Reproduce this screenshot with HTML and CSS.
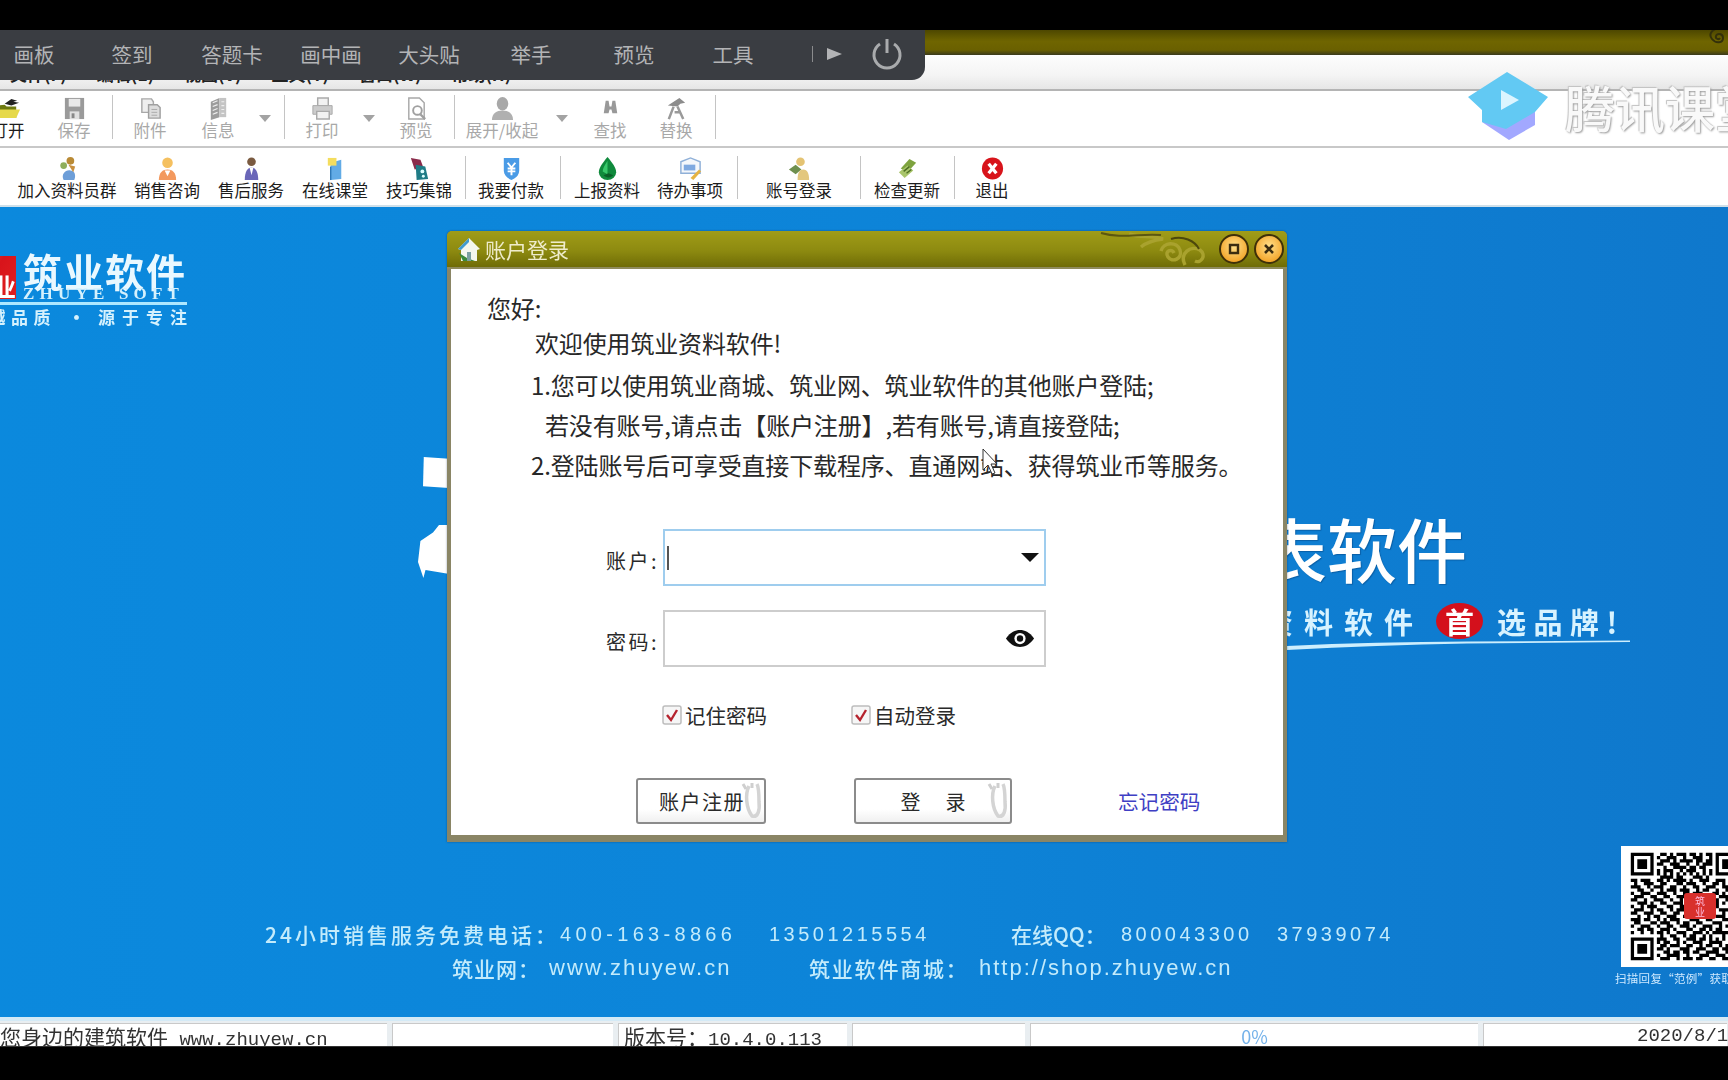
FILE: index.html
```html
<!DOCTYPE html>
<html lang="zh-CN">
<head>
<meta charset="utf-8">
<title>筑业资料软件</title>
<link rel="stylesheet" href="styles.css">
</head>
<body>
<div class="screen">
  <div class="black-top"></div>
  <div class="app-title">
    <svg class="title-swirl" viewBox="0 0 40 25" width="40" height="25"><path d="M34 -2c-10 0-14 6-10 11s11 4 11-1-6-5-7-2 3 4 4 2" fill="none" stroke="#33300a" stroke-width="2"/></svg>
  </div>
  <nav class="menubar">
    <span>文件(F)</span><span>编辑(E)</span><span>视图(V)</span><span>工具(T)</span><span>窗口(W)</span><span>帮助(H)</span>
  </nav>

  <div class="toolbar toolbar-file">
    <div class="tool"><svg class="ico" viewBox="0 0 26 26"><path d="M1 10l8-1 2 2h10v12H1z" fill="#6e7a10"/><path d="M4 14h21l-4 9H1z" fill="#e6d94a"/><path d="M9 8l7-5 6 2-4 1 6 1-8 3z" fill="#222"/></svg><span>打开</span></div>
    <div class="tool off"><svg class="ico" viewBox="0 0 26 26"><path d="M3 2h20v22H3z" fill="#9a9a9a"/><path d="M7 3h12v8H7z" fill="#e8e8e8"/><path d="M8 16h10v8H8z" fill="#e0e0e0"/><path d="M10 18h3v5h-3z" fill="#888"/></svg><span>保存</span></div>
    <i class="sep"></i>
    <div class="tool off"><svg class="ico" viewBox="0 0 26 26"><path d="M4 3h10l2 3v11H4z" fill="#eee" stroke="#a8a8a8" stroke-width="1.5"/><path d="M11 9h9l3 3v11H11z" fill="#ddd" stroke="#a0a0a0" stroke-width="1.5"/><path d="M14 14h6M14 17h6M14 20h6" stroke="#aaa"/></svg><span>附件</span></div>
    <div class="tool off"><svg class="ico" viewBox="0 0 26 26"><path d="M5 6l9-4v20l-9 3z" fill="#9c9c9c"/><path d="M14 2h7v20h-7z" fill="#c4c4c4"/><path d="M7 7l5-2M7 11l5-2M7 15l5-2M7 19l5-2M16 6h3M16 10h3M16 14h3M16 18h3" stroke="#eee" stroke-width="1.2"/></svg><span>信息</span></div>
    <div class="caret"></div>
    <i class="sep"></i>
    <div class="tool off"><svg class="ico" viewBox="0 0 26 26"><path d="M8 2h11v8H8z" fill="#f2f2f2" stroke="#aaa" stroke-width="1.5"/><path d="M3 10h20v9H3z" fill="#ccc" stroke="#aaa"/><path d="M7 16h13v8H7z" fill="#f2f2f2" stroke="#aaa" stroke-width="1.5"/></svg><span>打印</span></div>
    <div class="caret"></div>
    <div class="tool off"><svg class="ico" viewBox="0 0 26 26"><path d="M5 2h11l5 5v17H5z" fill="#fff" stroke="#a8a8a8" stroke-width="1.5"/><circle cx="14" cy="15" r="4.5" fill="none" stroke="#a0a0a0" stroke-width="2"/><path d="M17 19l5 5" stroke="#a0a0a0" stroke-width="2.5"/></svg><span>预览</span></div>
    <i class="sep"></i>
    <div class="tool off"><svg class="ico" viewBox="0 0 26 26"><ellipse cx="13" cy="8" rx="6" ry="7" fill="#a8a8a8"/><path d="M2 25c0-7 5-10 11-10s11 3 11 10z" fill="#b0b0b0"/></svg><span>展开/收起</span></div>
    <div class="caret"></div>
    <div class="tool off"><svg class="ico" viewBox="0 0 26 26"><path d="M8 5h3l1 6h2l1-6h3l2 13h-5l-1-4h-2l-1 4H6z" fill="#999"/></svg><span>查找</span></div>
    <div class="tool off"><svg class="ico" viewBox="0 0 26 26"><path d="M4 10L16 2l6 5-5 1-3 3z" fill="#8c8c8c"/><path d="M10 11l-5 13M14 11l6 13M11 17h6" stroke="#9a9a9a" stroke-width="2.6" fill="none"/></svg><span>替换</span></div>
    <i class="sep"></i>
  </div>

  <div class="toolbar toolbar-links">
    <div class="tool"><svg class="ico" viewBox="0 0 26 26"><circle cx="16" cy="5" r="4" fill="#b98a35"/><circle cx="9" cy="10" r="3.5" fill="#8fae5b"/><path d="M9 25c-3-6 2-11 7-10 5 0 6 6 4 10z" fill="#6d9ed8"/><path d="M14 9l7 2-2 6z" fill="#c88f3e"/></svg><span>加入资料员群</span></div>
    <div class="tool"><svg class="ico" viewBox="0 0 26 26"><circle cx="13" cy="7" r="5.5" fill="#f5c05f"/><path d="M4 25c0-8 4-11 9-11s9 3 9 11z" fill="#f3995e"/><path d="M10 15l3 6 3-6z" fill="#fff"/></svg><span>销售咨询</span></div>
    <div class="tool"><svg class="ico" viewBox="0 0 26 26"><circle cx="13" cy="6" r="4.5" fill="#7a5a40"/><path d="M6 25c0-9 3-13 7-13s7 4 7 13z" fill="#6a66b8"/><path d="M11 12h4l-2 8z" fill="#fff"/></svg><span>售后服务</span></div>
    <div class="tool"><svg class="ico" viewBox="0 0 26 26"><path d="M8 7l11-3v20l-11 1z" fill="#62abe6"/><path d="M5 2h9v8H5z" fill="#f4dd5e"/><path d="M8 11v14" stroke="#2f79b8" stroke-width="1.5"/></svg><span>在线课堂</span></div>
    <div class="tool"><svg class="ico" viewBox="0 0 26 26"><path d="M4 2l10 2 3 8-9 2z" fill="#8a2a4a"/><path d="M9 9l10 2 3 13-12 1z" fill="#1f7c86"/><circle cx="16" cy="16" r="2" fill="#dff"/><circle cx="17" cy="21" r="1.5" fill="#dff"/></svg><span>技巧集锦</span></div>
    <i class="sep"></i>
    <div class="tool"><svg class="ico" viewBox="0 0 26 26"><path d="M5 2h16v13c0 5-4 8-8 10-4-2-8-5-8-10z" fill="#4a9be6"/><path d="M9 7l4 5 4-5M9 13h8M9 16h8M13 12v8" stroke="#fff" stroke-width="2" fill="none"/></svg><span>我要付款</span></div>
    <i class="sep"></i>
    <div class="tool"><svg class="ico" viewBox="0 0 26 26"><path d="M13 1c5 6 9 11 9 16a9 8 0 0 1-18 0c0-5 4-10 9-16z" fill="#0f8a3c"/><path d="M13 5c-3 5-5 8-5 11l5 3z" fill="#38c86a"/><path d="M9 20c3 3 7 3 10 0l-5-2z" fill="#0a5f28"/></svg><span>上报资料</span></div>
    <div class="tool"><svg class="ico" viewBox="0 0 26 26"><path d="M3 6l10-4 10 4v12H3z" fill="#f4f7fb" stroke="#8fb0d8" stroke-width="1.5"/><path d="M6 9h12v6H6z" fill="#7fa9e0"/><path d="M13 23l9-9 2 2-8 9z" fill="#e6b341"/></svg><span>待办事项</span></div>
    <i class="sep"></i>
    <div class="tool"><svg class="ico" viewBox="0 0 26 26"><circle cx="14" cy="6" r="4.5" fill="#e4c373"/><path d="M2 14l7-5 6 5-6 5z" fill="#6e8f4e"/><path d="M11 25c0-8 2-11 6-11s6 4 6 11z" fill="#e3c77e"/></svg><span>账号登录</span></div>
    <i class="sep"></i>
    <div class="tool"><svg class="ico" viewBox="0 0 26 26"><path d="M6 13l9-10 7 4-9 10z" fill="#7ea33f"/><path d="M4 17l9-7 6 5-9 8z" fill="#a9c56b"/><path d="M9 16l6-5M12 18l5-4" stroke="#4d6e22" stroke-width="1.5"/></svg><span>检查更新</span></div>
    <i class="sep"></i>
    <div class="tool"><svg class="ico" viewBox="0 0 26 26"><ellipse cx="13" cy="13" rx="11" ry="11.5" fill="#d8141b"/><path d="M9 8l8 10M17 8L9 18" stroke="#fff" stroke-width="3.4"/></svg><span>退出</span></div>
  </div>

  <main class="canvas">
    <div class="brand">
      <div class="brand-mark"><span>业</span></div>
      <div class="brand-text">
        <div class="brand-name">筑业软件</div>
        <div class="brand-en">ZHUYE SOFT</div>
        <div class="brand-slogan"><span>卓越品质</span><b>•</b><span class="slogan-end">源于专注</span></div>
      </div>
    </div>

    <div class="hero-title">报表软件</div>
    <div class="hero-sub"><span>资料软件</span><em>首</em><span class="hero-sub-end">选品牌!</span></div>
    <svg class="hero-line" viewBox="0 0 345 10" width="345" height="10"><path d="M0 6C60 3 120 2 180 1.5L343 .5V2L180 3.5C120 4.5 60 7 0 10z" fill="#cdeefd"/></svg>
    <div class="hero-frag hero-frag-a"></div>
    <div class="hero-frag hero-frag-b"></div>

    <section class="dialog">
      <header class="dialog-bar">
        <svg class="dialog-house" viewBox="0 0 28 28" width="28" height="28"><path d="M3 14L14 3l11 11-3 1v11H6V15z" fill="#f4f7ee"/><path d="M14 3L3 14l3 1 8-8z" fill="#3f9bd0"/><path d="M4 18l4 8h12l-8-3z" fill="#3a8a3a"/><path d="M12 17h4v9h-4z" fill="#7aa0a0"/></svg>
        <h1>账户登录</h1>
        <svg class="dialog-orn" viewBox="0 0 130 36" width="130" height="36"><g fill="none" stroke="#a9a22e" stroke-width="3.5"><path d="M30 3c12 4 22 1 34 5-9 1-16 3-22 8"/><path d="M62 20c2-9 16-10 19-1s-8 13-12 7 4-9 6-4"/><path d="M86 34c-6-12 6-20 15-15 7 5 1 14-5 11"/></g><path d="M2 2c20 6 40 0 60 2" fill="none" stroke="#5c5710" stroke-width="2"/><path d="M72 8c12-4 24 2 28 10" fill="none" stroke="#4d480c" stroke-width="2"/></svg>
        <button class="round-btn" type="button" aria-label="最大化"><svg viewBox="0 0 14 14" width="14" height="14"><path d="M3 3h8v8H3z" fill="none" stroke="#3a2c10" stroke-width="2.4"/></svg></button>
        <button class="round-btn" type="button" aria-label="关闭"><svg viewBox="0 0 14 14" width="14" height="14"><path d="M3 3l8 8M11 3l-8 8" stroke="#3a2c10" stroke-width="2.6"/></svg></button>
      </header>
      <div class="dialog-body">
        <p class="line hello">您好:</p>
        <p class="line welcome">欢迎使用筑业资料软件!</p>
        <p class="line item">1.您可以使用筑业商城、筑业网、筑业软件的其他账户登陆;</p>
        <p class="line note">若没有账号,请点击【账户注册】,若有账号,请直接登陆;</p>
        <p class="line item">2.登陆账号后可享受直接下载程序、直通网站、获得筑业币等服务。</p>

        <div class="field field-user">
          <label>账户:</label>
          <div class="input input-focus"><i class="text-caret"></i><i class="drop"></i></div>
        </div>
        <div class="field field-pass">
          <label>密码:</label>
          <div class="input"><svg class="eye" viewBox="0 0 32 20" width="30" height="19"><path d="M1 10C6 3 11 1 16 1s10 2 15 9c-5 7-10 9-15 9S6 17 1 10z" fill="#111"/><circle cx="16" cy="10" r="6" fill="#fff"/><circle cx="16" cy="10" r="3.4" fill="#111"/></svg></div>
        </div>

        <div class="checks">
          <div class="check"><svg viewBox="0 0 20 20" width="20" height="20"><rect x="1" y="1" width="18" height="18" rx="2" fill="#f6f6f6" stroke="#bdbdbd" stroke-width="1.5"/><path d="M5 10l4 5 6-10" fill="none" stroke="#b5232e" stroke-width="2.4"/></svg><span>记住密码</span></div>
          <div class="check"><svg viewBox="0 0 20 20" width="20" height="20"><rect x="1" y="1" width="18" height="18" rx="2" fill="#f6f6f6" stroke="#bdbdbd" stroke-width="1.5"/><path d="M5 10l4 5 6-10" fill="none" stroke="#b5232e" stroke-width="2.4"/></svg><span>自动登录</span></div>
        </div>

        <div class="actions">
          <button class="btn btn-reg" type="button">账户注册<svg class="btn-orn" viewBox="0 0 24 42" width="24" height="42"><path d="M10 6c-4 8-3 22 3 30 6 2 8-6 7-14 0-8 0-14-2-18" fill="none" stroke="#d4d4d4" stroke-width="3.5"/><path d="M4 4l3 5M13 3v5" stroke="#cfcfcf" stroke-width="3"/></svg></button>
          <button class="btn btn-login" type="button"><span>登</span><span>录</span><svg class="btn-orn" viewBox="0 0 24 42" width="24" height="42"><path d="M10 6c-4 8-3 22 3 30 6 2 8-6 7-14 0-8 0-14-2-18" fill="none" stroke="#d4d4d4" stroke-width="3.5"/><path d="M4 4l3 5M13 3v5" stroke="#cfcfcf" stroke-width="3"/></svg></button>
          <a class="forgot">忘记密码</a>
        </div>
      </div>
    </section>

    <svg class="cursor" viewBox="0 0 16 28" width="16" height="28"><path d="M1 1v21l5-5 4 9 3-1-4-9h6z" fill="#fff" stroke="#333" stroke-width="1"/></svg>

    <div class="qr">
      <svg viewBox="0 0 38 37" width="124" height="121"><g transform="translate(3 2)"><path fill-rule="evenodd" d="M0 0h7v7H0zM1 1v5h5V1zM2 2h3v3H2zM26 0h7v7h-7zM27 1v5h5V1zM28 2h3v3h-3zM0 26h7v7H0zM1 27v5h5v-5zM2 28h3v3H2z"/><path fill="none" stroke="#000" d="M9 .5h2M12 .5h1M14 .5h3M18 .5h2M21 .5h1M23 .5h2M8 1.5h1M11 1.5h3M16 1.5h1M19 1.5h3M24 1.5h1M9 2.5h3M13 2.5h1M15 2.5h4M20 2.5h2M23 2.5h2M8 3.5h2M12 3.5h3M17 3.5h1M20 3.5h1M22 3.5h3M10 4.5h1M13 4.5h4M18 4.5h2M21 4.5h2M8 5.5h1M10 5.5h3M15 5.5h1M17 5.5h3M22 5.5h1M24 5.5h1M8 6.5h1M10 6.5h1M12 6.5h1M14 6.5h1M16 6.5h1M18 6.5h1M20 6.5h1M22 6.5h1M24 6.5h1M9 7.5h4M14 7.5h2M19 7.5h3M23 7.5h1M0 8.5h2M3 8.5h3M8 8.5h2M11 8.5h1M13 8.5h4M18 8.5h1M21 8.5h3M26 8.5h3M30 8.5h3M1 9.5h1M4 9.5h3M9 9.5h2M14 9.5h2M17 9.5h3M22 9.5h1M25 9.5h2M28 9.5h1M31 9.5h2M0 10.5h3M5 10.5h1M7 10.5h3M12 10.5h2M16 10.5h1M19 10.5h2M23 10.5h3M28 10.5h2M32 10.5h1M2 11.5h2M6 11.5h1M9 11.5h1M11 11.5h3M15 11.5h3M20 11.5h1M22 11.5h2M26 11.5h1M29 11.5h3M0 12.5h1M3 12.5h3M8 12.5h3M13 12.5h1M16 12.5h2M19 12.5h3M25 12.5h2M28 12.5h1M31 12.5h2M1 13.5h3M6 13.5h2M10 13.5h2M14 13.5h3M20 13.5h2M23 13.5h1M27 13.5h3M32 13.5h1M0 14.5h2M4 14.5h1M7 14.5h3M12 14.5h1M15 14.5h1M18 14.5h3M24 14.5h3M29 14.5h2M2 15.5h3M6 15.5h1M9 15.5h2M13 15.5h3M17 15.5h1M21 15.5h2M26 15.5h1M28 15.5h1M31 15.5h2M0 16.5h1M3 16.5h1M5 16.5h3M11 16.5h2M15 16.5h2M19 16.5h1M23 16.5h4M30 16.5h1M1 17.5h3M6 17.5h1M8 17.5h2M12 17.5h1M14 17.5h3M20 17.5h2M25 17.5h1M27 17.5h3M32 17.5h1M0 18.5h2M4 18.5h3M9 18.5h2M13 18.5h2M17 18.5h1M22 18.5h3M28 18.5h1M30 18.5h3M2 19.5h1M5 19.5h1M7 19.5h2M11 19.5h3M16 19.5h2M21 19.5h1M24 19.5h1M26 19.5h3M32 19.5h1M0 20.5h3M4 20.5h2M8 20.5h1M10 20.5h1M12 20.5h3M18 20.5h3M23 20.5h2M28 20.5h3M1 21.5h2M6 21.5h2M9 21.5h3M14 21.5h1M16 21.5h2M20 21.5h2M25 21.5h3M30 21.5h1M0 22.5h1M3 22.5h3M8 22.5h1M11 22.5h2M15 22.5h3M19 22.5h1M22 22.5h3M27 22.5h1M29 22.5h4M2 23.5h2M5 23.5h2M9 23.5h3M13 23.5h1M17 23.5h2M21 23.5h2M24 23.5h1M26 23.5h2M31 23.5h1M0 24.5h1M3 24.5h1M6 24.5h1M8 24.5h2M11 24.5h1M14 24.5h3M19 24.5h3M23 24.5h1M25 24.5h5M32 24.5h1M9 25.5h1M12 25.5h2M16 25.5h1M18 25.5h2M22 25.5h1M24 25.5h1M28 25.5h1M30 25.5h2M8 26.5h3M13 26.5h2M17 26.5h3M21 26.5h2M24 26.5h1M26 26.5h1M28 26.5h1M31 26.5h1M8 27.5h1M10 27.5h2M14 27.5h1M16 27.5h1M19 27.5h3M24 27.5h4M30 27.5h2M9 28.5h2M12 28.5h3M17 28.5h2M21 28.5h1M23 28.5h2M27 28.5h1M29 28.5h4M8 29.5h2M11 29.5h1M15 29.5h3M20 29.5h3M25 29.5h2M28 29.5h2M32 29.5h1M10 30.5h2M13 30.5h2M16 30.5h2M19 30.5h2M23 30.5h4M29 30.5h1M31 30.5h1M8 31.5h1M11 31.5h4M17 31.5h1M21 31.5h3M26 31.5h3M30 31.5h3M9 32.5h3M14 32.5h1M16 32.5h3M20 32.5h2M24 32.5h2M28 32.5h2M31 32.5h1"/></g></svg>
      <div class="qr-logo"><span>筑</span><span>业</span></div>
    </div>
    <div class="qr-caption">扫描回复“范例”获取资料</div>

    <div class="contact">
      <div class="contact-row row-a">
        <span class="c-tel-label">24小时销售服务免费电话：</span><span class="num c-tel">400-163-8866</span><span class="num c-mob">13501215554</span><span class="c-qq">在线QQ：</span><span class="num c-qq1">800043300</span><span class="num c-qq2">37939074</span>
      </div>
      <div class="contact-row row-b">
        <span class="c-web-label">筑业网：</span><span class="c-web">www.zhuyew.cn</span><span class="c-shop-label">筑业软件商城：</span><span class="c-shop">http://shop.zhuyew.cn</span>
      </div>
    </div>
  </main>

  <footer class="status">
    <div class="cell cell-a"><span class="cjk">您身边的建筑软件</span> www.zhuyew.cn</div>
    <div class="cell cell-b"></div>
    <div class="cell cell-c"><span class="cjk">版本号：</span>10.4.0.113</div>
    <div class="cell cell-d"></div>
    <div class="cell cell-e">0%</div>
    <div class="cell cell-f">2020/8/10</div>
  </footer>
  <div class="black-bottom"></div>

  <div class="overlay-bar">
    <span>画板</span><span>签到</span><span>答题卡</span><span>画中画</span><span>大头贴</span><span>举手</span><span>预览</span><span>工具</span>
    <span class="more"><i></i><b></b></span>
    <svg class="power" viewBox="0 0 36 36" width="36" height="36"><path d="M11 8a13 13 0 1 0 14 0" fill="none" stroke="#a9abad" stroke-width="3"/><path d="M18 3v14" stroke="#a9abad" stroke-width="3"/></svg>
  </div>

  <div class="watermark">
    <svg viewBox="0 0 82 68" width="82" height="68"><path d="M14 44v6l27 18 26-15V40z" fill="#a2a8ff"/><path d="M39 0L80 25 67 40 38 57 14 50V38L0 25z" fill="#62c9f3"/><path d="M33 18l18 10-18 10z" fill="#dcf5ff"/></svg>
    <span>腾讯课堂</span>
  </div>
</div>
</body>
</html>
```

FILE: styles.css
```css
* { box-sizing: border-box; }
html, body { margin: 0; padding: 0; background: #000; }
body { width: 1728px; height: 1080px; overflow: hidden; }
.screen {
  position: relative;
  width: 1728px;
  height: 1080px;
  overflow: hidden;
  display: flex;
  flex-direction: column;
  font-family: "Noto Sans CJK SC", "Noto Sans", sans-serif;
  filter: blur(0.55px);
}
.black-top { flex: 0 0 30px; background: #000; }
.black-bottom { flex: 0 0 34px; background: #000; border-top: 1px solid #333; }

.app-title {
  flex: 0 0 25px;
  display: flex;
  justify-content: flex-end;
  background: linear-gradient(#4d4700, #6f6500 45%, #6a6000 80%, #3a3a1c);
}
.menubar {
  flex: 0 0 36px;
  display: flex;
  gap: 30px;
  align-items: flex-end;
  padding: 0 0 5px 10px;
  background: linear-gradient(#fdfdfd, #f4f4f4 60%, #e6e6e6);
  border-bottom: 2px solid #b4b4b4;
  font-size: 17px;
  font-weight: 700;
  line-height: 20px;
  color: #222;
}

.toolbar {
  display: grid;
  align-items: stretch;
  background: #fff;
  overflow: hidden;
}
.toolbar-file {
  flex: 0 0 57px;
  margin-left: -26px;
  width: 1754px;
  grid-template-columns: 68px 64px 12px 64px 72px 22px 16px 60px 34px 60px 16px 80px 40px 56px 76px 2px;
  grid-template-rows: 51px;
  border-bottom: 2px solid #c8c8c8;
  padding-top: 4px;
}
.toolbar-links {
  flex: 0 0 59px;
  padding-left: 9px;
  grid-template-columns: 116px 84px 84px 84px 84px 8px 84px 14px 80px 86px 8px 116px 6px 88px 6px 70px;
  grid-template-rows: 49px;
  padding-top: 8px;
  border-bottom: 2px solid #cfe0ea;
}
.tool {
  display: flex;
  flex-direction: column;
  align-items: center;
  font-size: 16.5px;
  line-height: 22px;
  color: #1c1c1c;
  white-space: nowrap;
}
.tool span { margin-top: -2px; }
.tool .ico { width: 25px; height: 25px; flex: none; }
.toolbar-file .tool .ico { margin-top: 1px; }
.tool.off { color: #a8a8a8; }
.sep {
  display: block;
  justify-self: center;
  width: 1px;
  height: 44px;
  background: #c4c4c4;
}
.toolbar-links .sep { height: 43px; }
.caret { align-self: center; justify-self: center; width: 0; height: 0; margin-top: -4px;
  border-left: 6px solid transparent; border-right: 6px solid transparent; border-top: 7px solid #a3a3a3; }

.canvas {
  position: relative;
  flex: 0 0 810px;
  display: flex;
  flex-direction: column;
  overflow: hidden;
  background: linear-gradient(90deg, #0b89dd, #0d84d8 50%, #0f78cc);
  color: #fff;
}

.brand { display: flex; gap: 7px; padding-top: 46px; margin-left: -32px; align-items: flex-start; }
.brand-mark {
  width: 48px; height: 43px; margin-top: 3px;
  background: linear-gradient(120deg, #f25a3a, #d8141b 50%, #e02020);
  display: flex; justify-content: flex-end; align-items: flex-end;
  font-size: 24px; line-height: 26px; font-weight: 700; color: #fff;
}
.brand-text { width: 164px; }
.brand-name { font-size: 39px; line-height: 35px; height: 35px; font-weight: 700; letter-spacing: 2px; white-space: nowrap; color: #e9f8ff; }
.brand-en {
  font-family: "Liberation Serif", serif; font-weight: 700; font-size: 17px; line-height: 12px; height: 12px;
  letter-spacing: 5.2px; white-space: nowrap; color: #d5f1fd;
}
.brand-slogan {
  margin-top: 2px; margin-left: -32px; width: 196px;
  border-top: 3px solid #aee8ff; padding-top: 2px;
  font-size: 17px; line-height: 20px; font-weight: 700; white-space: nowrap; color: #d5f1fd;
  display: flex; justify-content: flex-end; align-items: center; letter-spacing: 5.5px;
}
.slogan-end { letter-spacing: 7px; margin-right: -7px; }
.brand-slogan b { margin: 0 13px 0 12px; letter-spacing: 0; }

.hero-title {
  position: absolute; left: 1187px; top: 301px;
  font-size: 70px; line-height: 80px; font-weight: 500; white-space: nowrap;
  color: #fff; text-shadow: 1px 1px 1px rgba(0,40,90,.35);
}
.hero-sub {
  position: absolute; left: 1264px; top: 391px;
  display: flex; align-items: center;
  font-size: 29px; line-height: 46px; font-weight: 700; letter-spacing: 11px; white-space: nowrap; color: #d8f3ff;
}
.hero-sub em {
  font-style: normal; width: 47px; height: 36px; border-radius: 50%; margin-right: 14px; margin-left: 12px;
  background: #d4101c; color: #fff; text-align: center; letter-spacing: 0; line-height: 36px;
}
.hero-sub-end { letter-spacing: 7.5px; }
.hero-line { position: absolute; left: 1287px; top: 433px; }
.hero-frag { position: absolute; background: #fff; }
.hero-frag-a { left: 423px; top: 250px; width: 26px; height: 31px; clip-path: polygon(3% 0, 100% 6%, 100% 100%, 0 94%); }
.hero-frag-b { left: 418px; top: 318px; width: 30px; height: 53px; clip-path: polygon(70% 0, 100% 0, 100% 92%, 25% 85%, 18% 100%, 0 70%, 8% 30%, 50% 14%); }

.dialog {
  position: absolute;
  left: 447px; top: 24px;
  width: 840px; height: 611px;
  display: flex;
  flex-direction: column;
  background: #8a8565;
  padding: 0 4px 7px;
  border-radius: 5px 5px 0 0;
  box-shadow: 0 0 2px rgba(0,30,70,.5);
  color: #222;
}
.dialog-bar {
  flex: 0 0 37px;
  margin: 0 -4px;
  display: flex;
  align-items: center;
  padding-left: 8px;
  padding-right: 3px;
  gap: 3px;
  border-radius: 5px 5px 0 0;
  background: linear-gradient(#a09c18, #8d8a10 55%, #6f6c06);
  border-bottom: 2px solid #8f8b5c;
}
.dialog-house { flex: none; margin-right: -1px; }
.dialog-bar h1 { margin: 0; font-size: 21px; line-height: 28px; font-weight: 400; color: #efeccb; }
.dialog-orn { flex: none; margin-left: auto; margin-right: -15px; }
.round-btn {
  flex: none; width: 30px; height: 30px; padding: 0; border-radius: 50%;
  display: flex; align-items: center; justify-content: center;
  border: 2px solid #3f3008;
  background: radial-gradient(circle at 50% 40%, #ffe08a, #f3a62c 75%);
  margin-left: 2px;
}
.dialog-body {
  flex: 1;
  background: #fff;
  padding: 20px 0 0 36px;
  display: flex;
  flex-direction: column;
}
.line { margin: 0; font-size: 24px; line-height: 40px; height: 40px; white-space: nowrap; color: #282828; letter-spacing: -.15px; }
.hello { height: 35px; line-height: 37px; }
.welcome { height: 41px; line-height: 37px; margin-left: 48px; }
.item { margin-left: 44px; }
.note { margin-left: 58px; }

.field { display: flex; margin-left: 119px; height: 57px; align-items: center; }
.field-user { margin-top: 44px; }
.field-pass { margin-top: 24px; }
.field label { width: 57px; flex: none; font-size: 20px; line-height: 28px; padding-top: 6px; letter-spacing: 2.5px; color: #2a2a2a; white-space: nowrap; }
.input {
  width: 383px; height: 57px; flex: none;
  border: 2px solid #cdcdcd; background: #fff;
  display: flex; align-items: center; justify-content: flex-end; position: relative;
  padding-right: 9px;
}
.input-focus { border-color: #9fcdee; padding-right: 5px; }
.text-caret { position: absolute; left: 2px; top: 15px; width: 2px; height: 24px; background: #555; }
.drop { width: 0; height: 0; border-left: 9px solid transparent; border-right: 9px solid transparent; border-top: 9px solid #111; }
.eye { flex: none; }

.checks { display: flex; margin: 37px 0 0 175px; height: 22px; }
.check { display: flex; align-items: center; gap: 3px; width: 189px; font-size: 20.5px; line-height: 22px; color: #2a2a2a; }
.check svg { flex: none; }
.actions { display: flex; align-items: center; margin: 52px 0 0 149px; }
.btn {
  position: relative;
  height: 46px; padding: 0;
  font-family: inherit; font-size: 20px; color: #2a2a2a;
  border: 2px solid #8b8b8b; border-radius: 3px;
  background: linear-gradient(#fff, #fff 70%, #f0f0f0);
  display: flex; align-items: center; justify-content: center;
}
.btn-orn { position: absolute; right: 1px; top: 0; }
.btn-reg { width: 130px; letter-spacing: 1.5px; justify-content: flex-start; padding-left: 21px; }
.btn-login { width: 158px; margin-left: 88px; gap: 25px; }
.forgot { margin-left: 106px; font-size: 20.6px; color: #3f3fc4; }

.cursor { position: absolute; left: 982px; top: 241px; }

.qr { position: absolute; left: 1621px; top: 639px; width: 124px; height: 121px; background: #fff; }
.qr svg { display: block; }
.qr-logo {
  position: absolute; left: 63px; top: 47px; width: 32px; height: 26px;
  background: #d8302c; color: #fbd; border-radius: 3px;
  display: flex; flex-direction: column; align-items: center; justify-content: center;
  font-size: 10px; line-height: 11px;
}
.qr-caption { position: absolute; left: 1615px; top: 763px; font-size: 11.5px; line-height: 16px; letter-spacing: .3px; color: #cfeaff; white-space: nowrap; }

.contact { margin-top: auto; padding-bottom: 32px; color: #c3ebfb; font-weight: 500; }
.contact-row { display: flex; height: 34px; align-items: center; white-space: nowrap; font-size: 21px; line-height: 34px; }
.row-a { padding-left: 265px; }
.row-b { padding-left: 452px; }
.num { font-family: "Liberation Sans", sans-serif; font-size: 20px; letter-spacing: 3.5px; }
.c-tel-label { width: 295px; letter-spacing: 3px; }
.c-tel { width: 209px; letter-spacing: 4.3px; }
.c-mob { width: 242px; }
.c-qq { width: 110px; }
.c-qq1 { width: 156px; }
.c-web-label { width: 97px; letter-spacing: 1px; }
.c-web { width: 260px; font-family: "Liberation Sans", sans-serif; font-size: 22px; letter-spacing: 2.1px; }
.c-shop-label { width: 170px; letter-spacing: 1.8px; }
.c-shop { font-family: "Liberation Sans", sans-serif; font-size: 22px; letter-spacing: 2px; }

.status {
  flex: 0 0 29px;
  display: flex;
  gap: 5px;
  overflow: hidden;
  background: #e9eef1;
  border-top: 4px solid #d4eaf6;
  padding-top: 2px;
}
.cell {
  height: 40px; flex: none; background: #fff;
  border-top: 1px solid #c9c9c9; border-left: 1px solid #c9c9c9;
  font-family: "Liberation Mono", monospace; font-size: 19px; line-height: 24px; color: #333; white-space: pre;
}
.cjk { font-family: "Noto Sans CJK SC", sans-serif; font-size: 21px; }
.cell-a { width: 387px; border-left: 0; }
.cell-b { width: 221px; }
.cell-c { width: 229px; padding-left: 5px; }
.cell-d { width: 173px; }
.cell-e { width: 448px; text-align: center; color: #74b2ea; font-family: "Noto Sans CJK SC", sans-serif; font-size: 18px; }
.cell-f { width: 244px; padding-left: 153px; }

.overlay-bar {
  position: absolute; left: 0; top: 30px; width: 925px; height: 50px;
  background: #3a3d42;
  border-radius: 0 0 13px 0;
  display: flex; align-items: center;
  color: #b3b4b6; font-size: 20.5px; line-height: 44px;
  padding-bottom: 2px;
}
.overlay-bar > span:not(.more) { position: relative; width: 100px; text-align: center; white-space: nowrap; }
.overlay-bar > span:first-child { width: 68px; }
.overlay-bar > span:nth-child(2) { width: 128px; }
.overlay-bar > span:nth-child(3) { width: 72px; }
.overlay-bar > span:nth-child(4) { width: 126px; }
.overlay-bar > span:nth-child(5) { width: 70px; }
.overlay-bar > span:nth-child(6) { width: 134px; }
.overlay-bar > span:nth-child(7) { width: 72px; }
.overlay-bar > span:nth-child(8) { width: 126px; margin-right: 16px; }
.more { display: flex; align-items: center; gap: 14px; }
.more i { width: 1px; height: 16px; background: #8a8b8d; }
.more b { width: 0; height: 0; border-left: 15px solid #b3b4b6; border-top: 6px solid transparent; border-bottom: 6px solid transparent; }
.power { margin-left: auto; margin-right: 20px; flex: none; }

.watermark {
  position: absolute; left: 1468px; top: 72px;
  display: flex; gap: 15px; align-items: flex-start;
}
.watermark svg { flex: none; }
.watermark span {
  font-size: 50px; line-height: 68px; white-space: nowrap;
  color: #f9f9f9; font-weight: 500;
  text-shadow: 1px 1px 2px #9a9a9a, -1px -1px 1px #c4c4c4;
}
```
